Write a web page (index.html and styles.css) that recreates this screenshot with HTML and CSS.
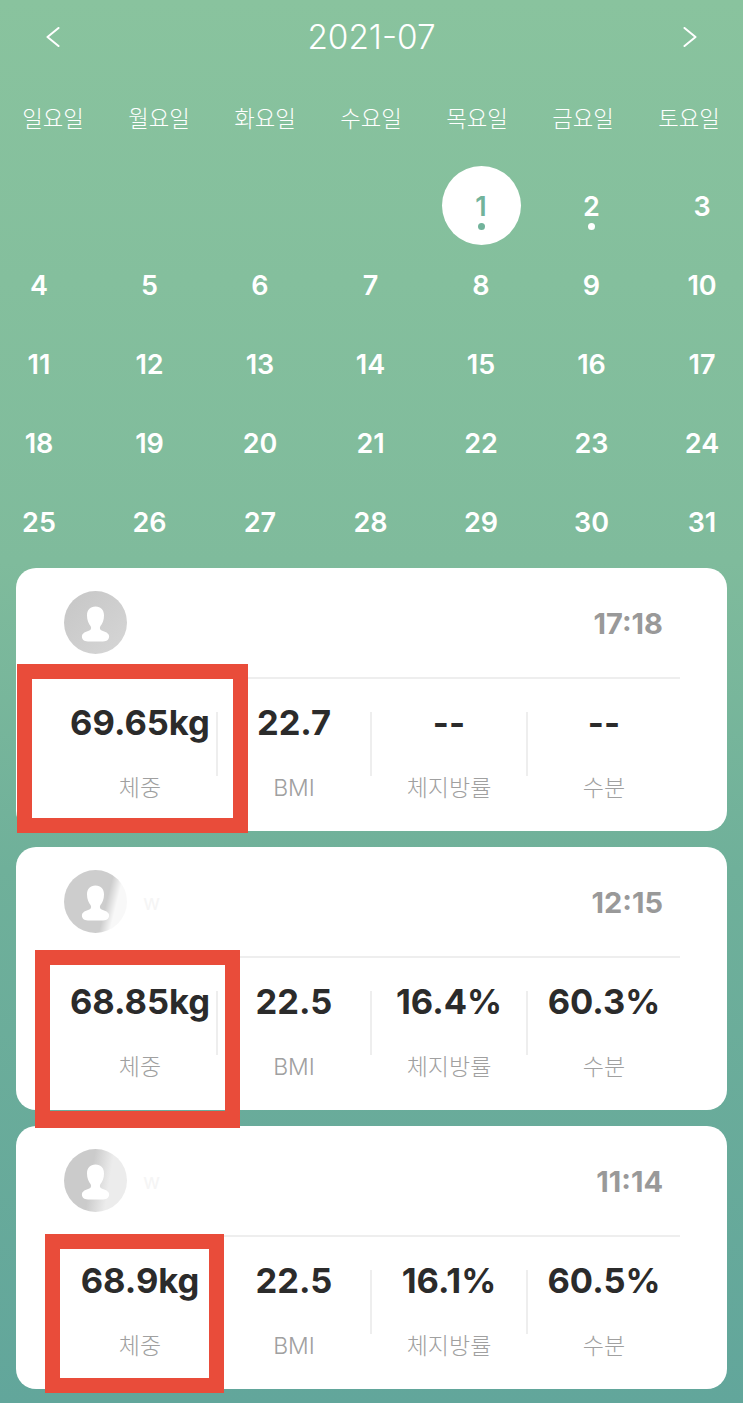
FILE: index.html
```html
<!DOCTYPE html>
<html lang="ko">
<head>
<meta charset="utf-8">
<title>2021-07</title>
<link rel="stylesheet" href="styles.css">
</head>
<body>
<main class="page">
  <header class="month-bar">
    <svg class="chev" viewBox="0 0 14 20"><path d="M12.500 1 L1.500 10 L12.500 19"/></svg>
    <h1 class="month">2021-07</h1>
    <svg class="chev" viewBox="0 0 14 20"><path d="M1.500 1 L12.500 10 L1.500 19"/></svg>
  </header>
  <div class="weekdays">
    <span>일요일</span><span>월요일</span><span>화요일</span><span>수요일</span><span>목요일</span><span>금요일</span><span>토요일</span>
  </div>
  <div class="days">
    <span class="day"></span><span class="day"></span><span class="day"></span><span class="day"></span>
    <span class="day today"><b class="disc"></b><span class="num">1</span><i class="dot"></i></span>
    <span class="day marked"><span class="num">2</span><i class="dot"></i></span>
    <span class="day"><span class="num">3</span></span>
    <span class="day"><span class="num">4</span></span><span class="day"><span class="num">5</span></span><span class="day"><span class="num">6</span></span><span class="day"><span class="num">7</span></span><span class="day"><span class="num">8</span></span><span class="day"><span class="num">9</span></span><span class="day"><span class="num">10</span></span>
    <span class="day"><span class="num">11</span></span><span class="day"><span class="num">12</span></span><span class="day"><span class="num">13</span></span><span class="day"><span class="num">14</span></span><span class="day"><span class="num">15</span></span><span class="day"><span class="num">16</span></span><span class="day"><span class="num">17</span></span>
    <span class="day"><span class="num">18</span></span><span class="day"><span class="num">19</span></span><span class="day"><span class="num">20</span></span><span class="day"><span class="num">21</span></span><span class="day"><span class="num">22</span></span><span class="day"><span class="num">23</span></span><span class="day"><span class="num">24</span></span>
    <span class="day"><span class="num">25</span></span><span class="day"><span class="num">26</span></span><span class="day"><span class="num">27</span></span><span class="day"><span class="num">28</span></span><span class="day"><span class="num">29</span></span><span class="day"><span class="num">30</span></span><span class="day"><span class="num">31</span></span>
  </div>
  <div class="cards">
    <article class="card">
      <div class="card-top">
        <svg class="avatar" viewBox="0 0 63 63"><defs><linearGradient id="a1" x1="0" y1="0" x2="1" y2="1"><stop offset="0" stop-color="#c6c6c6"/><stop offset="1" stop-color="#d6d6d6"/></linearGradient></defs><circle cx="31.500" cy="31.500" r="31.500" fill="url(#a1)"/><path class="bust" d="M31.500 15.500c-5.500 0-8.500 3.500-8.500 9 0 4.500 1.500 8 3.500 10.500 .8 1 .8 3-.2 4-2.500 1.500-7.300 2-8.300 5.500-.6 3 1.500 6 6 6h15c4.500 0 6.600-3 6-6-1-3.500-5.800-4-8.300-5.500-1-1-1-3-.2-4 2-2.500 3.500-6 3.500-10.500 0-5.500-3-9-8.500-9z"/></svg>
        <span class="name"></span>
        <time class="time">17:18</time>
      </div>
      <div class="stats">
        <div class="stat"><strong>69.65kg</strong><span>체중</span></div>
        <div class="stat"><strong>22.7</strong><span>BMI</span></div>
        <div class="stat"><strong>--</strong><span>체지방률</span></div>
        <div class="stat"><strong>--</strong><span>수분</span></div>
      </div>
      <div class="mark mark-one"></div>
    </article>
    <article class="card">
      <div class="card-top">
        <svg class="avatar" viewBox="0 0 63 63"><defs><linearGradient id="a2" x1="0.8" y1="0" x2="1" y2="0.05"><stop offset="0" stop-color="#cdcdcd"/><stop offset="0.8" stop-color="#f8f8f8"/></linearGradient></defs><circle cx="31.500" cy="31.500" r="31.500" fill="url(#a2)"/><path class="bust" d="M31.500 15.500c-5.500 0-8.500 3.500-8.500 9 0 4.500 1.500 8 3.500 10.500 .8 1 .8 3-.2 4-2.500 1.500-7.300 2-8.300 5.500-.6 3 1.500 6 6 6h15c4.500 0 6.600-3 6-6-1-3.500-5.800-4-8.300-5.500-1-1-1-3-.2-4 2-2.500 3.500-6 3.500-10.500 0-5.500-3-9-8.500-9z"/></svg>
        <span class="name">w</span>
        <time class="time">12:15</time>
      </div>
      <div class="stats">
        <div class="stat"><strong>68.85kg</strong><span>체중</span></div>
        <div class="stat"><strong>22.5</strong><span>BMI</span></div>
        <div class="stat"><strong>16.4%</strong><span>체지방률</span></div>
        <div class="stat"><strong>60.3%</strong><span>수분</span></div>
      </div>
      <div class="mark mark-two"></div>
    </article>
    <article class="card">
      <div class="card-top">
        <svg class="avatar" viewBox="0 0 63 63"><defs><linearGradient id="a3" x1="0.5" y1="0" x2="0.8" y2="0.05"><stop offset="0" stop-color="#cbcbcb"/><stop offset="1" stop-color="#ececec"/></linearGradient></defs><circle cx="31.500" cy="31.500" r="31.500" fill="url(#a3)"/><path class="bust" d="M31.500 15.500c-5.500 0-8.500 3.500-8.500 9 0 4.500 1.500 8 3.500 10.500 .8 1 .8 3-.2 4-2.500 1.500-7.300 2-8.300 5.500-.6 3 1.500 6 6 6h15c4.500 0 6.600-3 6-6-1-3.500-5.800-4-8.300-5.500-1-1-1-3-.2-4 2-2.500 3.500-6 3.500-10.500 0-5.500-3-9-8.500-9z"/></svg>
        <span class="name">w</span>
        <time class="time">11:14</time>
      </div>
      <div class="stats">
        <div class="stat"><strong>68.9kg</strong><span>체중</span></div>
        <div class="stat"><strong>22.5</strong><span>BMI</span></div>
        <div class="stat"><strong>16.1%</strong><span>체지방률</span></div>
        <div class="stat"><strong>60.5%</strong><span>수분</span></div>
      </div>
      <div class="mark mark-three"></div>
    </article>
  </div>
</main>
</body>
</html>
```

FILE: styles.css
```css
* { box-sizing: border-box; }
html, body { margin: 0; padding: 0; }
body {
  width: 743px;
  height: 1403px;
  overflow: hidden;
  font-family: Inter, "Noto Sans CJK KR", "Liberation Sans", sans-serif;
}
.page {
  height: 1403px;
  display: flex;
  flex-direction: column;
  background: linear-gradient(180deg, #89c39e 0%, #7fbb9c 40%, #6fb09a 62%, #62a69b 100%);
}
.month-bar {
  height: 74px;
  padding: 0 46px 0 46px;
  display: flex;
  align-items: center;
  justify-content: space-between;
  color: #fff;
}
.chev { width: 14px; height: 20px; }
.chev path { fill: none; stroke: #fff; stroke-width: 2; stroke-linecap: round; stroke-linejoin: round; }
.month { margin: 0; font-size: 33.300px; line-height: 38px; font-weight: 300; letter-spacing: 0; }
.weekdays {
  height: 92px;
  padding-top: 27px;
  display: grid;
  grid-template-columns: repeat(7, 106px);
  color: #fff;
  font-size: 22.300px;
  line-height: 32px;
  font-weight: 300;
  text-align: center;
  font-family: "Noto Sans CJK KR", sans-serif;
}
.days {
  height: 395px;
  padding: 0 6px 0 4px;
  display: grid;
  grid-template-columns: repeat(7, 70px);
  grid-auto-rows: 79px;
  justify-content: space-between;
  color: #fff;
}
.day {
  position: relative;
  display: flex;
  align-items: center;
  justify-content: center;
}
.num { position: relative; top: 1px; font-size: 27px; line-height: 32px; font-weight: 600; }
.disc {
  position: absolute;
  left: -4.500px;
  top: 0;
  width: 79px;
  height: 79px;
  border-radius: 50%;
  background: #fff;
}
.today .num { color: #72b39b; }
.dot {
  position: absolute;
  left: 50%;
  top: 57px;
  width: 7px;
  height: 7px;
  margin-left: -3.500px;
  border-radius: 50%;
  background: #fff;
}
.today .dot { background: #72b39b; }
.cards {
  padding: 7px 16px 0;
  display: flex;
  flex-direction: column;
  gap: 16px;
}
.card {
  position: relative;
  height: 263px;
  padding: 0 47px 0 48px;
  border-radius: 20px;
  background: #fff;
}
.card-top {
  height: 111px;
  padding: 23px 17px 0 0;
  display: flex;
  align-items: flex-start;
  border-bottom: 2px solid #eeeeee;
}
.avatar { width: 63px; height: 63px; flex: none; }
.bust { fill: #fff; }
.name { margin: 20px 0 0 16px; font-size: 21px; line-height: 26px; color: #f5f5f5; }
.time { margin: 17px 0 0 auto; font-size: 29px; line-height: 32px; font-weight: 700; color: #999999; }
.stats {
  padding-top: 33px;
  display: grid;
  grid-template-columns: 154px 154px 156px 152px;
}
.stat {
  position: relative;
  height: 64px;
  text-align: center;
  border-right: 2px solid #eeeeee;
}
.stat:last-child { border-right: 0; }
.stat strong {
  display: block;
  margin-top: -8px;
  font-size: 34.500px;
  line-height: 38px;
  font-weight: 700;
  color: #2b2b2b;
  white-space: nowrap;
}
.stat span {
  display: block;
  margin-top: 31px;
  font-size: 23px;
  line-height: 30px;
  font-weight: 300;
  color: #a0a0a0;
  font-family: Inter, "Noto Sans CJK KR", sans-serif;
}
.mark {
  position: absolute;
  z-index: 2;
  border: 15px solid #e94c3a;
}
.mark-one { left: 1px; top: 96px; width: 231px; height: 169px; }
.mark-two { left: 19px; top: 103px; width: 205px; height: 178px; border-bottom-width: 17px; }
.mark-three { left: 29px; top: 108px; width: 179px; height: 159px; }
```
